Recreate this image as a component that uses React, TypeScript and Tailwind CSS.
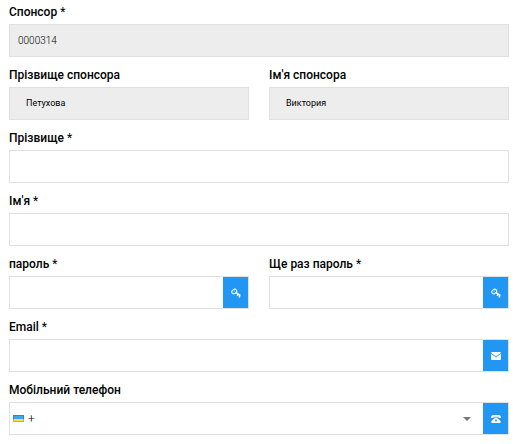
import { useId, type ReactNode } from "react";

const EnvelopeIcon = () => (
  <svg viewBox="0 0 20 16" className="h-2 w-2.5" fill="#fff" aria-hidden="true">
    <path d="M2 0h16a2 2 0 0 1 2 1.6L10 9 0 1.600A2 2 0 0 1 2 0Z" />
    <path d="M0 3.600l10 7.200L20 3.600V14a2 2 0 0 1-2 2H2a2 2 0 0 1-2-2Z" />
  </svg>
);

const KeyIcon = () => (
  <svg viewBox="0 0 20 20" className="size-2.5" fill="none" stroke="#fff" aria-hidden="true">
    <ellipse cx="6.500" cy="7" rx="5.200" ry="4" transform="rotate(-35 6.5 7)" strokeWidth="2.200" />
    <path d="M5 7.500l3-2.500" strokeWidth="1.200" />
    <path d="M10 9.500l8.500 5.500M12.500 15.500l1.500-4M16.500 19l1-5" strokeWidth="3" />
  </svg>
);

const PhoneIcon = () => (
  <svg viewBox="0 0 20 16" className="h-2 w-2.5" fill="#fff" aria-hidden="true">
    <path d="M0 5.500C0 2 2 0 4 0h12c2 0 4 2 4 5.500V6h-5V3.500H5V6H0Z" />
    <path
      fillRule="evenodd"
      d="M7 5h6v1.500l6 5.500v4H1v-4L7 6.500ZM10 9a2 2 0 1 0 0 4A2 2 0 0 0 10 9Z"
    />
  </svg>
);

const UkraineFlag = () => (
  <svg viewBox="0 0 11 7" className="h-[7px] w-[11px]" aria-hidden="true">
    <rect width="11" height="7" fill="#2f86c8" />
    <rect x="1" y="1" width="9" height="3" fill="#3fa5ea" />
    <rect y="4" width="11" height="3" fill="#cfb52a" />
    <rect x="1" y="4" width="9" height="2" fill="#fbe032" />
  </svg>
);

type FieldProps = {
  label: string;
  required?: boolean;
  type?: string;
  value?: string;
  readOnly?: boolean;
  inputClass?: string;
  before?: ReactNode;
  after?: ReactNode;
  icon?: ReactNode;
};

function Field({
  label,
  required,
  type = "text",
  value,
  readOnly,
  inputClass = "px-2",
  before,
  after,
  icon,
}: FieldProps) {
  const id = useId();
  return (
    <div className="min-w-0">
      <label htmlFor={id} className="mb-1 block text-xs font-medium text-black">
        {label}
        {required && <span className="font-normal"> *</span>}
      </label>
      <div
        className={`flex h-[33px] items-stretch border border-[#e0e0e0] ${readOnly ? "bg-[#ededed]" : "bg-white"}`}
      >
        {before}
        <input
          id={id}
          type={type}
          defaultValue={value}
          readOnly={readOnly}
          className={`min-w-0 flex-1 bg-transparent text-black outline-none ${inputClass}`}
        />
        {after}
        {icon && (
          <span className="flex w-[25px] items-center justify-center bg-[#2196f3]">{icon}</span>
        )}
      </div>
    </div>
  );
}

export default function App() {
  return (
    <form className="flex flex-col gap-2.5 bg-white pt-1 pr-3.5 pb-2 pl-[9px] font-['Roboto','Liberation_Sans',sans-serif]">
      <Field label="Спонсор" required readOnly value="0000314" inputClass="px-2 text-[10px] font-light" />
      <div className="grid grid-cols-2 gap-5">
        <Field label="Прізвище спонсора" readOnly value="Петухова" inputClass="px-4 text-[9px]" />
        <Field label="Ім'я спонсора" readOnly value="Виктория" inputClass="px-4 text-[9px]" />
      </div>
      <Field label="Прізвище" required />
      <Field label="Ім'я" required />
      <div className="grid grid-cols-2 gap-5">
        <Field label="пароль" required type="password" icon={<KeyIcon />} />
        <Field label="Ще раз пароль" required type="password" icon={<KeyIcon />} />
      </div>
      <Field label="Email" required type="email" icon={<EnvelopeIcon />} />
      <Field
        label="Мобільний телефон"
        type="tel"
        value="+"
        inputClass="pl-1 text-xs font-light"
        before={
          <span className="flex items-center pl-[3px]">
            <UkraineFlag />
          </span>
        }
        after={
          <button type="button" aria-label="Країна" className="flex w-8 items-center justify-center">
            <svg viewBox="0 0 8 4" className="h-1 w-2" fill="#777" aria-hidden="true">
              <path d="M0 0h8L4 4Z" />
            </svg>
          </button>
        }
        icon={<PhoneIcon />}
      />
    </form>
  );
}
